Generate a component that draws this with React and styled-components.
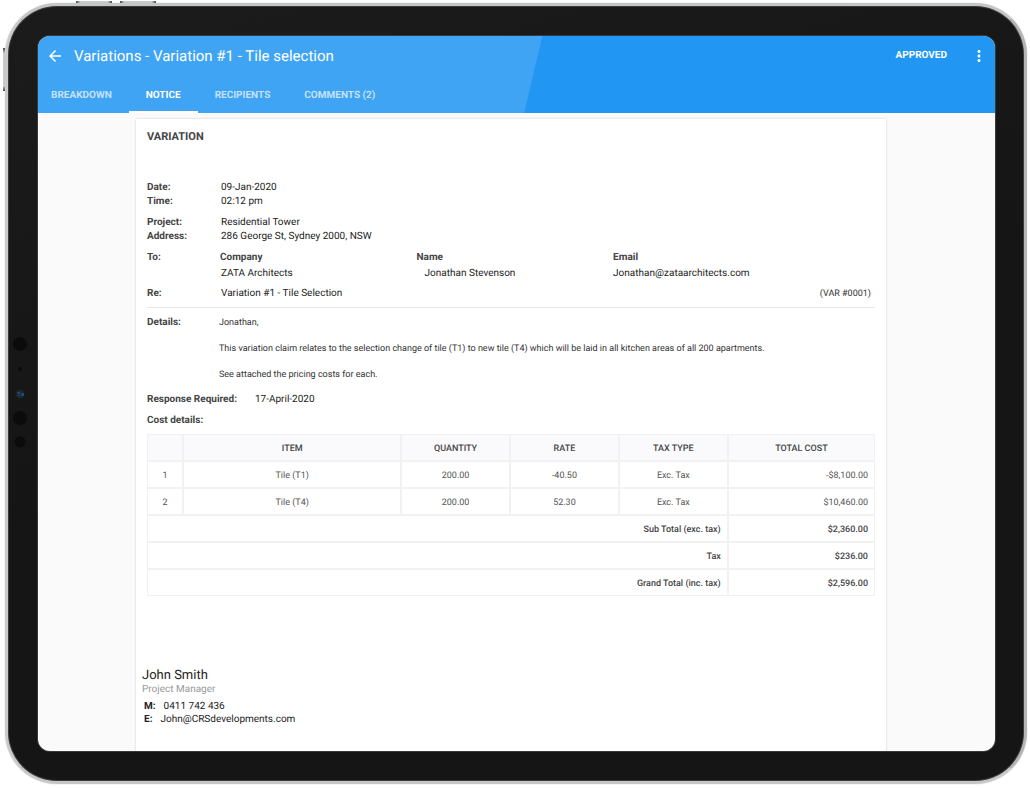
import React from "react";
import styled, { createGlobalStyle } from "styled-components";
import { MdArrowBack, MdMoreVert } from "react-icons/md";

const GlobalStyle = createGlobalStyle`
  *, *::before, *::after { box-sizing: border-box; }
  body {
    margin: 0;
    background: #fff;
    font-family: Roboto, "Liberation Sans", sans-serif;
    font-size: 10px;
    line-height: 14px;
    color: #333;
    text-rendering: geometricPrecision;
  }
  h1, h2, p, dl, dt, dd { margin: 0; font-size: inherit; }
`;

const Page = styled.div`
  display: flex;
  min-height: 100vh;
  padding: 3px 3px 4px 5px;
`;

const Device = styled.div`
  position: relative;
  display: flex;
  flex: 1;
  padding: 30px 29px 30px 30px;
  border: 3px solid;
  border-color: #c4c6c5 #b5b5b5 #c9c6c6 #c9cbca;
  border-radius: 52px;
  background: linear-gradient(165deg, #1b1b1b 0%, #151515 50%);
  box-shadow: inset 0 0 0 1px #3a3b3b, 0 0 1px #999;
`;

const SideKey = styled.span`
  position: absolute;
  background: linear-gradient(${(p) => (p.$vertical ? "180deg" : "90deg")}, #444, #c8cbc8 12%, #c8cbc8 88%, #444);
  top: ${(p) => p.$top}px;
  left: ${(p) => p.$left}px;
  width: ${(p) => (p.$vertical ? 2 : 36)}px;
  height: ${(p) => (p.$vertical ? 43 : 2)}px;
`;

const Sensors = styled.svg`
  position: absolute;
  top: 330px;
  left: 4px;
`;

const Screen = styled.div`
  display: flex;
  flex-direction: column;
  flex: 1;
  overflow: hidden;
  border-radius: 12px;
  background: #fafafa;
  box-shadow: 0 0 0 1px #3a3a3a;
`;

const Header = styled.header`
  position: relative;
  color: #fff;
  background: #2196f3;
  &::before {
    content: "";
    position: absolute;
    inset: 0;
    background: rgba(255, 255, 255, 0.14);
    clip-path: polygon(0 0, 52.7% 0, 50.8% 100%, 0 100%);
  }
`;

const TitleBar = styled.div`
  position: relative;
  display: flex;
  align-items: center;
  height: 40px;
  padding: 0 7px 0 8px;
`;

const IconButton = styled.button`
  display: flex;
  padding: 0;
  border: 0;
  color: inherit;
  background: none;
  font-size: 18px;
`;

const Title = styled.h1`
  flex: 1;
  margin-left: 10px;
  font-size: 15px;
  font-weight: 400;
`;

const Status = styled.span`
  margin-right: 23px;
  font-weight: 700;
`;

const Tabs = styled.nav`
  position: relative;
  display: flex;
`;

const Tab = styled.a`
  padding: 13px 17px 8px;
  border-bottom: 2px solid ${(p) => (p.$active ? "#fff" : "transparent")};
  color: ${(p) => (p.$active ? "#fff" : "rgba(255, 255, 255, 0.7)")};
  font-weight: 700;
  text-decoration: none;
  &:first-child { padding-left: 13px; }
`;

const Sheet = styled.main`
  flex: 1;
  margin: 6px 109px 0 98px;
  padding: 11px 11px 24px 11px;
  background: #fff;
  box-shadow: 0 0 2px rgba(0, 0, 0, 0.2);
`;

const SheetTitle = styled.h2`
  margin-bottom: 37px;
  font-size: 11px;
  font-weight: 700;
  color: #444;
`;

const Fields = styled.dl`
  display: grid;
  grid-template-columns: 74px 1fr;
  margin-bottom: 7px;
`;

const Label = styled.dt`
  font-weight: 700;
  color: #444;
`;

const Value = styled.dd`
  color: #222;
`;

const Recipient = styled.div`
  display: grid;
  grid-template-columns: 73px 27% 27% 1fr;
  row-gap: 2px;
  margin-bottom: 6px;
`;

const Heading = styled.span`
  font-weight: 700;
  color: ${(p) => (p.$dark ? "#222" : "#444")};
`;

const Entry = styled.span`
  padding-left: ${(p) => p.$indent || 0}px;
  color: #222;
`;

const Subject = styled.div`
  display: flex;
  padding: 0 4px 6px 0;
  border-bottom: 1px solid #e8e8e8;
`;

const SubjectText = styled.span`
  flex: 1;
  color: #222;
`;

const SubjectLabel = styled.span`
  width: 74px;
  font-weight: 700;
  color: #444;
`;

const Reference = styled.span`
  font-size: 9px;
`;

const Details = styled.div`
  display: grid;
  grid-template-columns: 72px 1fr;
  padding: 8px 0 11px;
`;

const Message = styled.div`
  display: grid;
  gap: 12px;
  font-size: 9px;
`;

const Response = styled.p`
  display: flex;
  gap: 18px;
  margin-bottom: 7px;
`;

const Table = styled.table`
  width: 100%;
  margin-top: 6px;
  table-layout: fixed;
  border-collapse: separate;
  border-spacing: 0;
  border: 1px solid #f1f1f1;
  font-size: 9px;
  line-height: 12px;
`;

const Col = styled.col`
  width: ${(p) => p.$w}%;
`;

const Cell = styled.td`
  height: 27px;
  padding: 2px 6px 0;
  border: solid #f1f1f1;
  border-width: 0 2px 2px 0;
  color: #555;
  text-align: ${(p) => p.$align || "center"};
  font-weight: 400;
  &:last-child { border-right-width: 0; }
`;

const HeadCell = styled(Cell)`
  color: #444;
  background: #fafafc;
  font-weight: 500;
`;

const TotalCell = styled(Cell)`
  color: #444;
  font-weight: 500;
  tr:last-child > & {
    height: 25px;
    border-bottom-width: 0;
  }
`;

const Signature = styled.footer`
  margin: 72px 0 0 -5px;
  color: #222;
`;

const SignName = styled.p`
  font-size: 13px;
  line-height: 16px;
`;

const SignRole = styled.p`
  margin-bottom: 4px;
  line-height: 12px;
  color: #999;
`;

const Contact = styled.p`
  display: flex;
  gap: 8px;
  padding-left: 2px;
  line-height: 13px;
`;

const tabs = ["BREAKDOWN", "NOTICE", "RECIPIENTS", "COMMENTS (2)"];
const columns = [
  ["", 5],
  ["ITEM", 30],
  ["QUANTITY", 15],
  ["RATE", 15],
  ["TAX TYPE", 15],
  ["TOTAL COST", 20],
];
const items = [
  ["1", "Tile (T1)", "200.00", "-40.50", "Exc. Tax", "-$8,100.00"],
  ["2", "Tile (T4)", "200.00", "52.30", "Exc. Tax", "$10,460.00"],
];
const totals = [
  ["Sub Total (exc. tax)", "$2,360.00"],
  ["Tax", "$236.00"],
  ["Grand Total (inc. tax)", "$2,596.00"],
];

export default function App() {
  return (
    <Page>
      <GlobalStyle />
      <Device>
        <SideKey $top={-5} $left={68} />
        <SideKey $top={-5} $left={112} />
        <SideKey $vertical $top={42} $left={-5} />
        <Sensors width="18" height="120" aria-hidden="true">
          <g fill="#0b0b0b">
            <circle cx="8" cy="8" r="7" />
            <circle cx="8" cy="33" r="2" />
            <circle cx="8" cy="82" r="7" />
            <circle cx="8" cy="106" r="5.5" />
          </g>
          <circle cx="8" cy="58" r="4.5" fill="#20252a" />
          <path d="M5 56h3v2H6zM9 57h3v3H9zM6 59h2v1H6z" fill="#174a78" />
        </Sensors>
        <Screen>
          <Header>
            <TitleBar>
              <IconButton aria-label="Back"><MdArrowBack /></IconButton>
              <Title>Variations - Variation #1 - Tile selection</Title>
              <Status>APPROVED</Status>
              <IconButton aria-label="More options"><MdMoreVert /></IconButton>
            </TitleBar>
            <Tabs>
              {tabs.map((t) => (
                <Tab key={t} href="#" $active={t === "NOTICE"}>{t}</Tab>
              ))}
            </Tabs>
          </Header>
          <Sheet>
            <SheetTitle>VARIATION</SheetTitle>
            <Fields>
              <Label>Date:</Label><Value>09-Jan-2020</Value>
              <Label>Time:</Label><Value>02:12 pm</Value>
            </Fields>
            <Fields>
              <Label>Project:</Label><Value>Residential Tower</Value>
              <Label>Address:</Label><Value>286 George St, Sydney 2000, NSW</Value>
            </Fields>
            <Recipient>
              <Heading>To:</Heading>
              <Heading>Company</Heading>
              <Heading>Name</Heading>
              <Heading>Email</Heading>
              <span />
              <Entry $indent={1}>ZATA Architects</Entry>
              <Entry $indent={8}>Jonathan Stevenson</Entry>
              <Entry>Jonathan@zataarchitects.com</Entry>
            </Recipient>
            <Subject>
              <SubjectLabel>Re:</SubjectLabel>
              <SubjectText>Variation #1 - Tile Selection</SubjectText>
              <Reference>(VAR #0001)</Reference>
            </Subject>
            <Details>
              <Heading>Details:</Heading>
              <Message>
                <p>Jonathan,</p>
                <p>This variation claim relates to the selection change of tile (T1) to new tile (T4) which will be laid in all kitchen areas of all 200 apartments.</p>
                <p>See attached the pricing costs for each.</p>
              </Message>
            </Details>
            <Response>
              <Heading>Response Required:</Heading>
              <Entry>17-April-2020</Entry>
            </Response>
            <Heading id="cost-title">Cost details:</Heading>
            <Table aria-labelledby="cost-title">
              <colgroup>
                {columns.map(([name, w]) => <Col key={name} $w={w} />)}
              </colgroup>
              <thead>
                <tr>
                  {columns.map(([name]) => <HeadCell as="th" key={name}>{name}</HeadCell>)}
                </tr>
              </thead>
              <tbody>
                {items.map((row) => (
                  <tr key={row[0]}>
                    {row.map((v, i) => <Cell key={i} $align={i === 5 ? "right" : "center"}>{v}</Cell>)}
                  </tr>
                ))}
                {totals.map(([name, v]) => (
                  <tr key={name}>
                    <TotalCell as="th" scope="row" colSpan={5} $align="right">{name}</TotalCell>
                    <TotalCell $align="right">{v}</TotalCell>
                  </tr>
                ))}
              </tbody>
            </Table>
            <Signature>
              <SignName>John Smith</SignName>
              <SignRole>Project Manager</SignRole>
              <Contact><Heading $dark>M:</Heading><span>0411 742 436</span></Contact>
              <Contact><Heading $dark>E:</Heading><span>John@CRSdevelopments.com</span></Contact>
            </Signature>
          </Sheet>
        </Screen>
      </Device>
    </Page>
  );
}
